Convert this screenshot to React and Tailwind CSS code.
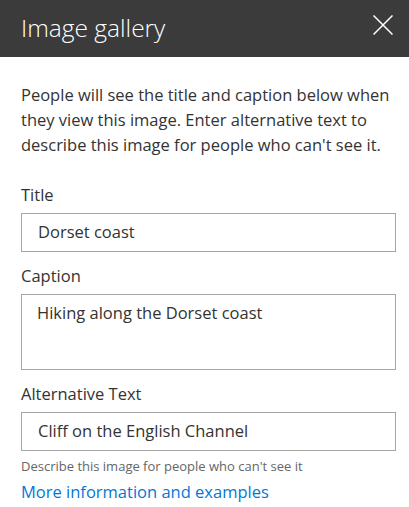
import React from 'react';

function Field({ label, value, multiline }) {
    return (
        <div className="flex flex-col">
            <label className="text-[16.5px] leading-[22px] text-[#333333] mb-[7px]">{label}</label>
            {multiline ? (
                <div className="h-[76px] border border-[#a6a6a6] bg-white px-[15px] pt-[6px] text-[16.5px] leading-[24px] text-[#333333]">
                    {value}
                </div>
            ) : (
                <div className="h-[39px] border border-[#a6a6a6] bg-white px-[16px] flex items-center text-[16.5px] text-[#333333]">
                    {value}
                </div>
            )}
        </div>
    );
}

export default function App() {
    return (
        <div className="w-[409px] h-[507px] bg-white font-['Open_Sans',sans-serif] overflow-hidden">
            <div className="h-[57px] bg-[#3b3b3b] flex items-center justify-between pl-[21px] pr-[16px]">
                <h1 className="text-[24.5px] font-light text-white leading-none">Image gallery</h1>
                <svg width="20" height="20" viewBox="0 0 20 20" className="text-white self-start mt-[15px]">
                    <path d="M0.5 0.5 L19.5 19.5 M19.5 0.5 L0.5 19.5" stroke="currentColor" strokeWidth="1.5" fill="none" />
                </svg>
            </div>

            <div className="pl-[21px] pr-[13px] pt-[25px]">
                <p className="text-[16.5px] leading-[25px] text-[#333333]">
                    People will see the title and caption below when they view this image. Enter alternative text to describe this image for people who can't see it.
                </p>

                <div className="mt-[27px] flex flex-col gap-[13px]">
                    <Field label="Title" value="Dorset coast" />
                    <Field label="Caption" value="Hiking along the Dorset coast" multiline />
                    <Field label="Alternative Text" value="Cliff on the English Channel" />
                </div>

                <p className="mt-[6px] text-[13px] leading-[18px] text-[#666666]">Describe this image for people who can't see it</p>
                <a href="#" className="mt-[6px] block text-[16.5px] leading-[22px] text-[#0078d7]">More information and examples</a>
            </div>
        </div>
    );
}
